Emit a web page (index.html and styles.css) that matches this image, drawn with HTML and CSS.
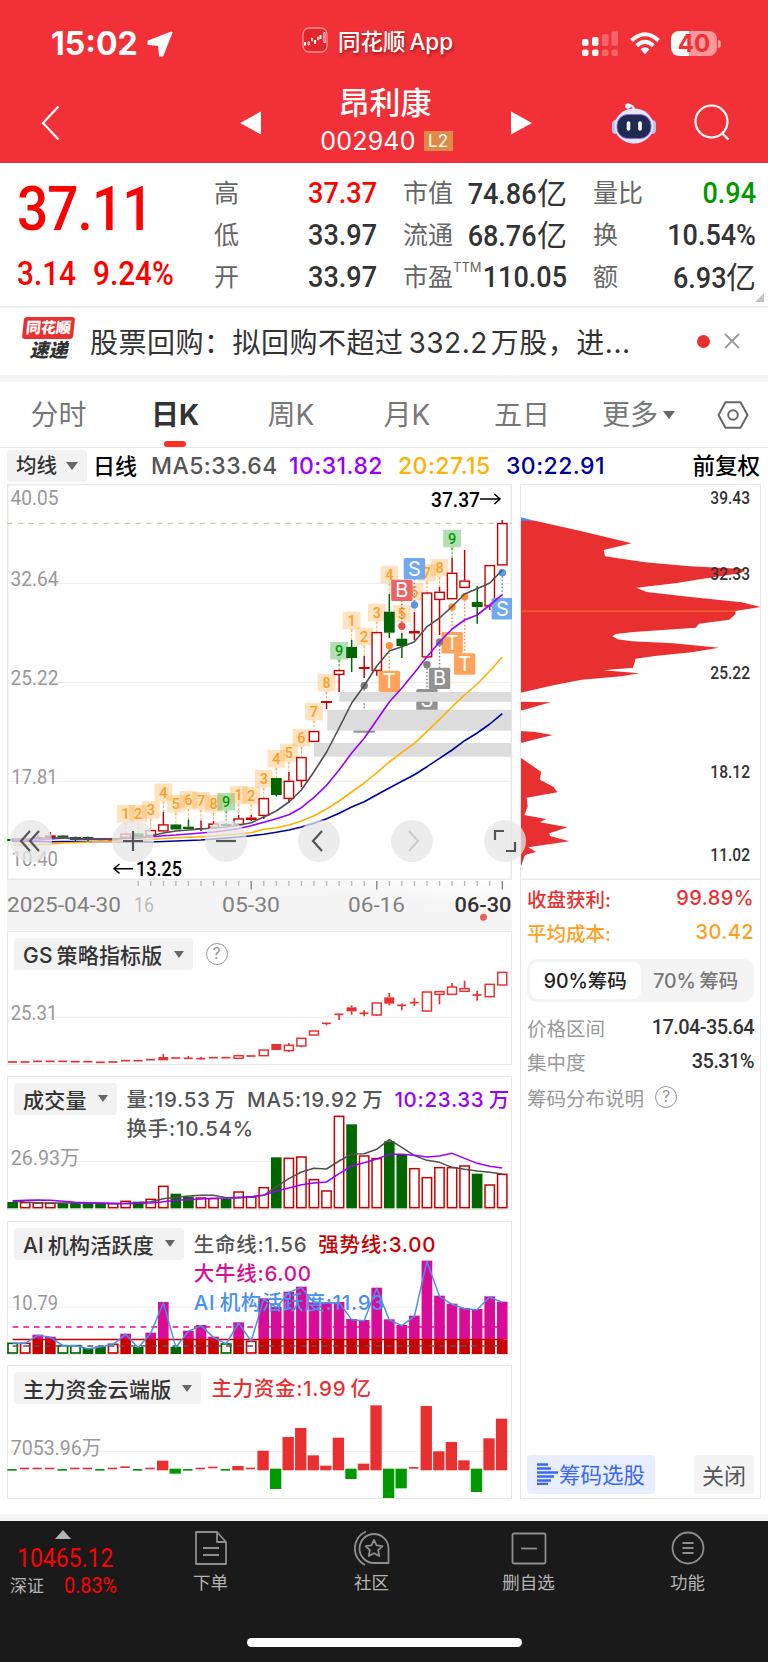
FILE: index.html
```html
<!DOCTYPE html>
<html lang="zh-CN">
<head>
    <meta charset="UTF-8">
    <meta name="viewport" content="width=device-width, initial-scale=1.0">
    <title>昂利康 002940</title>
    <link rel="stylesheet" href="styles.css">
</head>
<body>
    <header class="header">
        <div class="status-bar">
            <div class="clock">
                <span>15:02</span>
                <svg width="26" height="26" viewBox="0 0 26 26"><path d="M24.5 1.5 L15.5 24.5 L13 24.5 L12 14 L1.5 13 L1.5 10.5 Z" fill="#fff" stroke="#fff" stroke-width="2" stroke-linejoin="round"/></svg>
            </div>
            <div class="app-name">
                <svg width="26" height="26" viewBox="0 0 26 26"><rect x="1" y="1" width="24" height="24" rx="6" fill="#e3262b" stroke="#fb8f90" stroke-width="1.3"/><g stroke="#fff" fill="none"><path d="M3 15v3.500M13 13v4M18.500 8v4" stroke-width="2"/><path d="M6 15v3h1.4v-3zM9.500 11v3h1v-3zM15.500 10v3h1.200v-3zM21.800 5.500v10h1.400v-10z" stroke-width=".8"/></g></svg>
                <span>同花顺&thinsp;App</span>
            </div>
            <div class="signals">
                <svg width="37" height="26" viewBox="0 0 37 26"><g fill="#fff"><rect x="0" y="8" width="6.5" height="7" rx="2"/><rect x="10" y="6" width="6.5" height="9" rx="2"/><rect x="0" y="18.5" width="6.5" height="6.5" rx="2"/><rect x="10" y="18.5" width="6.5" height="6.5" rx="2"/></g><g fill="#fff" opacity=".25"><rect x="20" y="3" width="6.5" height="12" rx="2"/><rect x="29.5" y="0" width="6.5" height="15" rx="2"/><rect x="20" y="18.5" width="6.5" height="6.5" rx="2"/><rect x="29.5" y="18.5" width="6.5" height="6.5" rx="2"/></g></svg>
                <svg class="wifi" width="30" height="23" viewBox="0 0 30 23"><g fill="none" stroke="#fff" stroke-width="4"><path d="M1.5 8.5 Q15 -4 28.5 8.5"/><path d="M6.7 13.7 Q15 6 23.3 13.7"/></g><path d="M10.5 17.2 Q15 13.3 19.5 17.2 L15 22.2 Z" fill="#fff"/></svg>
                <div class="battery"><span>40</span></div>
            </div>
        </div>
        <div class="nav-bar">
            <svg class="back" width="19" height="36" viewBox="0 0 19 36"><path d="M17.5 1.5 L2 18 L17.5 34.5" fill="none" stroke="#fff" stroke-width="2.2"/></svg>
            <svg class="prev" width="22" height="24" viewBox="0 0 22 24"><path d="M0 12 L21 0.5 V23.5 Z" fill="#fff"/></svg>
            <div class="stock">
                <h1>昂利康</h1>
                <p>002940 <span class="level">L2</span></p>
            </div>
            <svg class="next" width="22" height="24" viewBox="0 0 22 24"><path d="M21 12 L0 0.5 V23.5 Z" fill="#fff"/></svg>
            <svg class="robot" width="44" height="42" viewBox="0 0 44 42">
                <path d="M16 4 Q21 2 22 8" fill="none" stroke="#e8edff" stroke-width="2.4"/>
                <circle cx="16" cy="4" r="2.8" fill="#eef1ff"/>
                <rect x="0" y="18" width="8" height="14" rx="4" fill="#b8c2f4"/>
                <rect x="36" y="18" width="8" height="14" rx="4" fill="#b8c2f4"/>
                <ellipse cx="22" cy="24" rx="19.5" ry="17.5" fill="#e2e8ff"/>
                <rect x="5" y="12.5" width="34" height="24" rx="11" fill="#202a50" stroke="#8f6be8" stroke-width="1"/>
                <path d="M16.500 21v6M28 21v6" stroke="#fff" stroke-width="3.600" stroke-linecap="round"/>
            </svg>
            <svg class="search" width="36" height="37" viewBox="0 0 36 37"><circle cx="17.5" cy="17.5" r="16" fill="none" stroke="#fff" stroke-width="2.2"/><path d="M28 29 L34.5 35.5" stroke="#fff" stroke-width="2.2"/></svg>
        </div>
    </header>

    <section class="quote">
        <div class="last">
            <div class="price"><span class="din">37.11</span></div>
            <div class="change"><span class="din">3.14</span><span class="din">9.24%</span></div>
        </div>
        <dl>
            <dt>高</dt><dd class="din up">37.37</dd>
            <dt>低</dt><dd class="din">33.97</dd>
            <dt>开</dt><dd class="din">33.97</dd>
        </dl>
        <dl>
            <dt>市值</dt><dd><span class="din">74.86</span>亿</dd>
            <dt>流通</dt><dd><span class="din">68.76</span>亿</dd>
            <dt>市盈<sup>TTM</sup></dt><dd class="din">110.05</dd>
        </dl>
        <dl>
            <dt>量比</dt><dd class="din down">0.94</dd>
            <dt>换</dt><dd class="din">10.54%</dd>
            <dt>额</dt><dd><span class="din">6.93</span>亿</dd>
        </dl>
    </section>

    <section class="news">
        <div class="news-logo"><b>同花顺</b><i>速递</i></div>
        <p>股票回购：拟回购不超过<span>332.2</span>万股，进...</p>
        <span class="dot"></span>
        <svg width="16" height="16" viewBox="0 0 16 16"><path d="M1 1 L15 15 M15 1 L1 15" stroke="#999" stroke-width="1.8"/></svg>
    </section>

    <nav class="tabs">
        <a>分时</a>
        <a class="active">日K</a>
        <a>周K</a>
        <a>月K</a>
        <a>五日</a>
        <a>更多<i class="caret"></i></a>
        <svg width="32" height="28" viewBox="0 0 32 28"><path d="M8.5 1.2 H23.5 L30.5 14 L23.5 26.8 H8.5 L1.5 14 Z" fill="none" stroke="#666" stroke-width="2"/><circle cx="16" cy="14" r="4.8" fill="none" stroke="#666" stroke-width="2"/></svg>
    </nav>

    <div class="ma-row">
        <span class="chip">均线<i class="caret"></i></span>
        <b>日线</b>
        <span>MA5:33.64</span>
        <span class="ma10">10:31.82</span>
        <span class="ma20">20:27.15</span>
        <span class="ma30">30:22.91</span>
        <b class="adjust">前复权</b>
    </div>

    <main class="board">
        <div class="charts">
            <div class="main-chart">
                <svg id="kline" width="505" height="396" viewBox="7 484 505 396"></svg>
                <div class="tools">
                    <button><svg viewBox="-21 -21 42 42"><path d="M-1 -10 L-10 0 L-1 10 M8 -10 L-1 0 L8 10"/></svg></button>
                    <button><svg viewBox="-21 -21 42 42"><path d="M-10 0 H10 M0 -10 V10"/></svg></button>
                    <button><svg viewBox="-21 -21 42 42"><path d="M-10 0 H10"/></svg></button>
                    <button><svg viewBox="-21 -21 42 42"><path d="M3 -10 L-6 0 L3 10"/></svg></button>
                    <button class="disabled"><svg viewBox="-21 -21 42 42"><path d="M-3 -10 L6 0 L-3 10"/></svg></button>
                    <button><svg viewBox="-21 -21 42 42"><path d="M-10 -1 V-10 H-1 M10 1 V10 H1"/></svg></button>
                </div>
            </div>
            <svg id="axis" width="505" height="50" viewBox="7 880 505 50"></svg>
            <div class="panel">
                <svg id="gs" width="505" height="134" viewBox="21 34 1515 402"></svg>
                <div class="legend">
                    <span class="chip">GS&thinsp;策略指标版<i class="caret"></i></span>
                    <span class="help">?</span>
                </div>
            </div>
            <div class="panel">
                <svg id="volume" width="505" height="134" viewBox="21 467 1515 402"></svg>
                <div class="legend">
                    <span class="chip">成交量<i class="caret"></i></span>
                    <div class="values"><span>量:19.53&thinsp;万</span><span>MA5:19.92&thinsp;万</span><span class="ma10">10:23.33&thinsp;万</span><br><span>换手:10.54%</span></div>
                </div>
            </div>
            <div class="panel">
                <svg id="ai" width="505" height="134" viewBox="21 31 1515 402"></svg>
                <div class="legend">
                    <span class="chip">AI&thinsp;机构活跃度<i class="caret"></i></span>
                    <div class="values"><span>生命线:1.56</span><span class="strong">强势线:3.00</span><br><span class="bull">大牛线:6.00</span><br><span class="active-line">AI&thinsp;机构活跃度:11.93</span></div>
                </div>
            </div>
            <div class="panel">
                <svg id="fund" width="505" height="134" viewBox="21 466 1515 402"></svg>
                <div class="legend">
                    <span class="chip">主力资金云端版<i class="caret"></i></span>
                    <div class="values"><span class="fund">主力资金:1.99&thinsp;亿</span></div>
                </div>
            </div>
        </div>

        <aside class="chips">
            <svg id="dist" width="241" height="396" viewBox="30 12 723 1188"></svg>
            <div class="chips-info">
                <p class="row profit"><span>收盘获利:</span><span>99.89%</span></p>
                <p class="row cost"><span>平均成本:</span><span>30.42</span></p>
                <div class="switch"><span class="on">90%筹码</span><span>70%&thinsp;筹码</span></div>
                <p class="row"><span>价格区间</span><b>17.04-35.64</b></p>
                <p class="row"><span>集中度</span><b>35.31%</b></p>
                <p class="row about"><span>筹码分布说明</span><span class="help">?</span></p>
            </div>
            <div class="chips-actions">
                <button class="pick"><svg width="21" height="22" viewBox="0 0 21 22"><path d="M0 1.5H11M0 5.5H14M0 9.5H21M0 13.5H17M0 17.5H14M0 21H11" stroke="#3a68f5" stroke-width="2.3"/></svg>筹码选股</button>
                <button>关闭</button>
            </div>
        </aside>
    </main>

    <footer class="footer">
        <div class="index">
            <i class="up-caret"></i>
            <div class="index-value"><span class="din">10465.12</span></div>
            <div class="index-row"><span>深证</span><span class="din">0.83%</span></div>
        </div>
        <a><svg width="36" height="36" viewBox="0 0 36 36"><path d="M3 2 H24 L33 12 V34 H3 Z M24 2 V12 H33 M10 18 H26 M10 25 H26"/></svg>下单</a>
        <a><svg width="36" height="36" viewBox="0 0 36 36"><path d="M20 4 A14.5 14.5 0 0 1 34.5 18 V33 H20 A14.5 14.5 0 0 1 20 4 Z M12 1.500 A18.500 18.500 0 0 0 11 35"/><path d="M20 10 L22.6 15.4 L28.4 16.1 L24.2 20.2 L25.2 26 L20 23.2 L14.8 26 L15.8 20.2 L11.6 16.1 L17.4 15.4 Z"/></svg>社区</a>
        <a><svg width="36" height="36" viewBox="0 0 36 36"><rect x="1.5" y="3.5" width="33" height="30" rx="1.5"/><path d="M10 18.5 H26"/></svg>删自选</a>
        <a><svg width="36" height="36" viewBox="0 0 36 36"><circle cx="18" cy="18" r="15.5"/><path d="M12.5 13 H23.5 M12.5 18 H23.5 M12.5 23 H23.5"/></svg>功能</a>
        <div class="home-bar"></div>
    </footer>

    <script src="charts.js"></script>
</body>
</html>
```

FILE: styles.css
```css
* {
    box-sizing: border-box;
}
body {
    margin: 0;
    width: 768px;
    background: #fff;
    color: #333;
    font-family: Inter, "Noto Sans CJK SC", sans-serif;
}
h1, p, dl, dd {
    margin: 0;
}
svg {
    display: block;
    flex: none;
}
button {
    border: none;
    padding: 0;
    font-family: inherit;
}
.din {
    font-family: Roboto, "Noto Sans CJK SC", sans-serif;
    font-weight: 500;
    display: inline-block;
    transform: scaleX(0.9);
    transform-origin: right center;
}
.caret {
    display: inline-block;
    border: 6px solid transparent;
    border-top: 8px solid #666;
    border-bottom: 0;
}

/* header */
.header {
    height: 163px;
    background: #f13037;
    color: #fff;
}
.status-bar {
    height: 84px;
    display: grid;
    grid-template-columns: 302px 280px 1fr;
}
.clock {
    display: flex;
    align-items: center;
    gap: 9px;
    padding: 3px 0 0 51px;
    font-size: 32px;
    font-weight: 700;
}
.app-name {
    display: flex;
    align-items: center;
    gap: 10px;
    padding-bottom: 5px;
    font-size: 22.5px;
    font-weight: 500;
    text-shadow: 1px 2px 3px rgba(80, 0, 0, 0.5);
}
.signals {
    display: flex;
    align-items: center;
    padding-top: 3px;
}
.wifi {
    margin: 0 11px 0 11px;
}
.battery {
    position: relative;
    width: 46px;
    height: 25px;
    border-radius: 8px;
    background: linear-gradient(90deg, #fff 40%, #f99 40%);
    color: #f13037;
    font-size: 24px;
    line-height: 25px;
    font-weight: 700;
    text-align: center;
}
.battery::after {
    content: "";
    position: absolute;
    right: -4px;
    top: 9px;
    width: 3px;
    height: 8px;
    border-radius: 0 3px 3px 0;
    background: #f99;
}
.nav-bar {
    height: 79px;
    display: flex;
    align-items: center;
    padding: 0 0 2px 41px;
}
.prev {
    margin-left: 180px;
}
.stock {
    width: 249px;
    text-align: center;
}
.stock h1 {
    padding-right: 3px;
    font-size: 31px;
    line-height: 37px;
    font-weight: 500;
}
.stock p {
    display: flex;
    justify-content: center;
    align-items: center;
    gap: 8px;
    height: 40px;
    font-size: 25px;
    letter-spacing: 0.2px;
}
.level {
    width: 29px;
    height: 20px;
    background: #e08a45;
    font-size: 17px;
    line-height: 20px;
}
.robot {
    margin-left: 79px;
}
.search {
    margin-left: 38px;
}

/* quote */
.quote {
    position: relative;
    height: 145px;
    display: grid;
    grid-template-columns: 197px 163px 164px 163px;
    column-gap: 26px;
    padding: 9px 0 0 17px;
    border-bottom: 2px solid #eee;
}
.quote::after {
    content: "";
    position: absolute;
    right: 4px;
    bottom: 4px;
    border-left: 9px solid transparent;
    border-bottom: 9px solid #c4c4c4;
}
.last {
    color: #fe0000;
    margin-right: -26px;
}
.last .din {
    transform-origin: left center;
}
.price {
    height: 76px;
    font-size: 61px;
    line-height: 72px;
    letter-spacing: -1px;
}
.change {
    height: 48px;
    display: flex;
    font-size: 33px;
    line-height: 51px;
}
.change span + span {
    margin-left: 11px;
}
.quote dl {
    display: grid;
    grid-template-columns: auto 1fr;
    grid-auto-rows: 42px;
    line-height: 42px;
    margin-left: -26px;
    margin-right: 26px;
}
.quote dt {
    font-size: 25px;
    color: #666;
    white-space: nowrap;
}
.quote sup {
    display: inline-block;
    margin-right: -30px;
    font-size: 13px;
    line-height: 13px;
    vertical-align: 14px;
}
.quote dd {
    font-size: 30px;
    text-align: right;
    white-space: nowrap;
}
.quote .up {
    color: #fe0000;
}
.quote .down {
    color: #009900;
}

/* news */
.news {
    height: 74px;
    display: flex;
    align-items: center;
    padding: 0 28px 7px 22px;
    border-bottom: 7px solid #f4f4f4;
}
.news-logo {
    width: 53px;
    display: flex;
    flex-direction: column;
    align-items: center;
    padding-top: 4px;
}
.news-logo b {
    width: 51px;
    height: 22px;
    background: #e93030;
    color: #fff;
    border-radius: 3px;
    transform: skewX(-6deg);
    font-size: 15px;
    line-height: 22px;
    font-weight: 900;
    text-align: center;
}
.news-logo i {
    font-size: 19px;
    line-height: 24px;
    font-weight: 900;
}
.news p {
    flex: 1;
    margin-left: 15px;
    padding-top: 5px;
    font-size: 28px;
    letter-spacing: 0.5px;
    white-space: nowrap;
}
.news p span {
    padding: 0 3px 0 5px;
}
.dot {
    width: 13px;
    height: 13px;
    margin: 6px 14px 0 0;
    border-radius: 50%;
    background: #e93030;
}
.news svg {
    margin-top: 6px;
}

/* tabs */
.tabs {
    height: 66px;
    display: grid;
    grid-template-columns: 117px 116px 116px 116px 114px 119px 1fr;
    align-items: center;
    border-bottom: 1px solid #e6e6e6;
}
.tabs a {
    height: 65px;
    line-height: 66px;
    font-size: 28px;
    color: #777;
    text-align: center;
}
.tabs .active {
    position: relative;
    color: #333;
    font-weight: 700;
}
.tabs .active::after {
    content: "";
    position: absolute;
    left: 47px;
    bottom: 0;
    width: 22px;
    height: 6px;
    border-radius: 3px;
    background: #f83028;
}
.tabs .caret {
    margin-left: 5px;
    vertical-align: 6px;
}
.tabs svg {
    margin-left: 19px;
}

/* moving averages row */
.chip {
    display: inline-flex;
    align-items: center;
    justify-content: space-between;
    height: 32px;
    padding: 0 9px;
    border-radius: 4px;
    background: #f2f2f2;
    color: #333;
    font-size: 21px;
    font-weight: 500;
    letter-spacing: 0.2px;
    white-space: nowrap;
}
.ma-row {
    height: 36px;
    display: grid;
    grid-template-columns: 86px 58px 138px 109px 108px 120px 1fr;
    align-items: center;
    padding-left: 7px;
    font-size: 23px;
    line-height: 34px;
    font-weight: 500;
    letter-spacing: 0.45px;
    color: #555;
    white-space: nowrap;
}
.ma-row .chip {
    width: 80px;
    font-size: 20.5px;
    letter-spacing: 0;
}
.ma-row b {
    font-size: 22px;
    font-weight: 500;
    line-height: 32px;
    letter-spacing: 0;
    color: #000;
}
.ma-row .adjust {
    padding-right: 8px;
    font-size: 22.5px;
    text-align: right;
}
.ma10 {
    color: #9900ff;
}
.ma20 {
    color: #ffb000;
}
.ma30 {
    color: #00009c;
}

/* charts */
.board {
    height: 1030px;
    display: flex;
    gap: 8px;
    padding-left: 7px;
}
.charts {
    width: 505px;
}
.main-chart {
    position: relative;
}
.tools {
    position: absolute;
    z-index: 2;
    left: 3px;
    top: 336px;
    width: 517px;
    display: flex;
    gap: 51px;
}
.tools button {
    flex: none;
    width: 42px;
    height: 42px;
    border-radius: 50%;
    background: rgba(229, 229, 229, 0.75);
}
.tools button:first-child {
    margin-right: 9px;
}
.tools path {
    fill: none;
    stroke: #555;
    stroke-width: 2.2;
}
.tools .disabled path {
    stroke: #ccc;
}
.panel {
    display: grid;
    width: 505px;
    height: 134px;
    margin-bottom: 10.8px;
    border: 1.5px solid #e8e8e8;
}
#axis {
    margin-bottom: 1px;
}
.panel > * {
    grid-area: 1 / 1;
}
.panel > svg {
    margin: -1.5px;
}
.legend {
    display: flex;
    align-items: flex-start;
    padding: 6px 0 0 6px;
    height: 120px;
}
.legend .caret {
    margin-left: 11px;
    border-width: 7px 5.5px 0;
}
.legend .help {
    margin: 5px 0 0 13px;
}
.values {
    margin-left: 10px;
    padding-top: 2px;
    font-size: 20.5px;
    line-height: 29px;
    font-weight: 500;
    letter-spacing: 0.7px;
    color: #555;
    white-space: nowrap;
}
.values span {
    margin-right: 11px;
}
.values .strong {
    color: #c80000;
}
.values .bull {
    color: #d80c96;
}
.values .active-line {
    color: #4a90ee;
}
.values .fund {
    color: #e93030;
}
.values .ma10 {
    color: #9900ff;
    margin-right: 0;
}
.help {
    width: 22px;
    height: 22px;
    border: 1.6px solid #999;
    border-radius: 50%;
    color: #999;
    font-size: 16px;
    line-height: 19px;
    text-align: center;
}

/* chip distribution */
.chips {
    width: 241px;
    height: 1015px;
    display: flex;
    flex-direction: column;
    border: 1px solid #e8e8e8;
}
.chips > svg {
    margin: -1px;
}
.chips-info {
    padding: 2px 6px 0 6px;
}
.row {
    display: flex;
    justify-content: space-between;
    align-items: center;
    height: 34px;
    font-size: 19.5px;
    color: #999;
}
.row b {
    font-family: Roboto, sans-serif;
    font-size: 20px;
    font-weight: 500;
    color: #333;
    letter-spacing: -0.6px;
}
.profit {
    color: #e93030;
    font-weight: 500;
}
.cost {
    color: #ffa01e;
    font-weight: 500;
}
.profit span + span, .cost span + span {
    font-size: 20px;
    letter-spacing: 0.4px;
}
.switch {
    display: flex;
    height: 43px;
    margin: 10px 0 8px;
    padding: 3px;
    border-radius: 10px;
    background: #f4f4f4;
    font-size: 19.5px;
    font-weight: 500;
    line-height: 38px;
    color: #777;
    text-align: center;
}
.switch span {
    flex: 1;
}
.switch .on {
    background: #fff;
    border-radius: 8px;
    color: #222;
}
.about {
    justify-content: flex-start;
    gap: 11px;
    height: 38px;
}
.chips-actions {
    display: flex;
    justify-content: space-between;
    margin-top: auto;
    padding: 0 6px 4px;
}
.chips-actions button {
    width: 60px;
    height: 39px;
    padding-bottom: 2px;
    border-radius: 4px;
    background: #f4f4f4;
    color: #555;
    font-size: 22px;
}
.chips-actions .pick {
    display: flex;
    align-items: center;
    justify-content: center;
    gap: 1px;
    width: 128px;
    background: #e8eeff;
    color: #3a68f5;
    font-size: 21.5px;
}

/* footer */
.footer {
    position: relative;
    height: 148px;
    display: flex;
    border-top: 7px solid #f4f4f4;
    background: #1a1a1a;
    color: #b4b4b4;
}
.index {
    width: 131px;
    padding: 9px 0 0 10px;
}
.up-caret {
    display: block;
    margin-left: 45px;
    width: 0;
    border: 8px solid transparent;
    border-top: 0;
    border-bottom: 9px solid #b4b4b4;
}
.index-value {
    margin: 2px 0 0 7px;
    height: 32px;
    font-size: 25.5px;
    line-height: 34px;
    color: #f00;
}
.index .din {
    transform-origin: left center;
    font-weight: 400;
}
.index-row {
    display: flex;
    gap: 20px;
    font-size: 17px;
    line-height: 26px;
}
.index-row .din {
    color: #f00;
    font-size: 22px;
}
.footer a {
    width: 159px;
    padding-top: 9px;
    display: flex;
    flex-direction: column;
    align-items: center;
    font-size: 17.5px;
    line-height: 33px;
}
.footer a:nth-of-type(2) {
    padding-left: 4px;
}
.footer a path, .footer a rect, .footer a circle {
    fill: none;
    stroke: #8e8e8e;
    stroke-width: 1.8;
    stroke-linejoin: round;
}
.home-bar {
    position: absolute;
    left: 247px;
    bottom: 15px;
    width: 275px;
    height: 9px;
    border-radius: 5px;
    background: #fff;
}
```

FILE: charts.js
```js
const RED = '#cc0000';
const GREEN = '#006600';

function rect(x, y, w, h, fill, extra = '') {
    return `<rect x="${x}" y="${y}" width="${w}" height="${h}" fill="${fill}" ${extra}/>`;
}
function line(x1, y1, x2, y2, stroke, w, extra = '') {
    return `<line x1="${x1}" y1="${y1}" x2="${x2}" y2="${y2}" stroke="${stroke}" stroke-width="${w}" ${extra}/>`;
}
function text(x, y, size, str, fill, width, extra = '') {
    const len = width ? `textLength="${width}" lengthAdjust="spacingAndGlyphs"` : '';
    return `<text x="${x}" y="${y}" font-size="${size}" fill="${fill}" font-family="Roboto, Noto Sans CJK SC, sans-serif" ${len} ${extra}>${str}</text>`;
}
function poly(values, fx, stroke, w) {
    const pts = values.map((v, i) => fx(i).toFixed(1) + ',' + v).join(' ');
    return `<polyline points="${pts}" fill="none" stroke="${stroke}" stroke-width="${w}" stroke-linejoin="round"/>`;
}

// x centre of a day, in px and in the sub charts' units (1/3 px)
const px = i => 12.7 + 12.554 * i;
const ux = i => 38 + 37.66 * i;

/* ---------- K line ---------- */
// [color, hollow, high, top, bottom, low]
const candles = [
    ['g', 0, 838, 839, 841, 842], ['r', 0, 838, 839, 841, 841], ['r', 0, 835, 837, 839, 839], ['r', 0, 832, 835.3, 838, 838],
    ['g', 0, 835, 835.5, 837.5, 837.5], ['g', 0, 836.5, 837, 840, 841], ['g', 0, 836.5, 837, 840, 841], ['g', 0, 838, 838, 840, 840],
    ['r', 0, 838, 838.5, 840.5, 840.5], ['r', 1, 833.5, 833.5, 838, 838], ['g', 0, 833.3, 833.3, 837, 837], ['r', 1, 830, 830, 836, 836],
    ['r', 1, 812, 824.3, 831.5, 831.5], ['g', 0, 824, 824.5, 829.5, 829.5], ['g', 0, 819.5, 826.7, 829, 829], ['r', 0, 820.5, 828, 829, 831],
    ['r', 1, 821, 823.5, 828, 828], ['g', 0, 823, 824, 826, 826], ['r', 1, 815, 818.3, 825, 825], ['r', 0, 815, 817.5, 820, 821],
    ['r', 1, 798, 798, 816, 819], ['g', 0, 778, 778, 795, 796.5], ['r', 1, 772, 780.7, 799, 803], ['r', 1, 757, 757, 781, 787],
    ['r', 1, 731, 731, 742, 742], ['r', 0, 701, 701, 703, 709], ['r', 1, 670, 670, 675, 692], ['g', 0, 640, 647, 658, 672],
    ['r', 0, 656, 667, 669, 678], ['r', 1, 632, 632, 671, 675.7], ['g', 0, 594, 611.7, 632.7, 638], ['g', 0, 633, 638.7, 646, 658],
    ['r', 0, 612, 631, 633.5, 640], ['r', 1, 592, 592.5, 657.5, 658], ['r', 1, 587, 591.7, 600, 635], ['r', 1, 558, 572.7, 599.3, 599.3],
    ['r', 1, 550, 580.5, 588, 588], ['g', 0, 585.7, 602, 607, 623.7], ['r', 1, 565, 565, 606.5, 610], ['r', 1, 520, 523, 565.5, 565.5]
];

// TD sequence marks: [day, number, top]
const marks = [
    [9, 1, 805], [10, 2, 805], [11, 3, 801], [12, 4, 783.5], [13, 5, 795], [14, 6, 791], [15, 7, 792], [16, 8, 795], [17, 9, 793],
    [18, 1, 786], [19, 2, 786.7], [20, 3, 770], [21, 4, 750], [22, 5, 743.7], [23, 6, 729], [24, 7, 702.7], [25, 8, 674], [26, 9, 642],
    [27, 1, 611.7], [28, 2, 627.7], [29, 3, 603.7], [30, 4, 565.7], [31, 5, 605], [32, 6, 583], [33, 7, 564], [34, 8, 559], [35, 9, 529.7]
];

const ma5 = [839, 839, 838, 838, 838, 839, 839, 839.5, 839, 838.5, 838, 836, 833, 831, 830, 829, 828, 827, 825.3, 822.7, 817, 811, 802, 790, 771.7, 752, 728, 703, 685.7, 666, 651, 646.7, 641.7, 626.7, 618, 606.7, 594, 588.7, 583, 570];
const ma10 = [841, 841, 840, 839, 838, 838.5, 838.7, 839, 839, 838, 838, 837, 835.7, 835, 834, 833, 832, 830.5, 828.5, 825.7, 822.3, 818.7, 814.7, 807.7, 797.3, 785.3, 770, 753, 738.3, 720, 702, 688, 672.7, 656.7, 642, 629, 620, 615, 605, 594.7];
const ma20 = [845, 845, 844.5, 844, 843, 842.5, 842, 841.5, 841.5, 841, 840.5, 839.5, 838.5, 837.7, 837.3, 836.7, 836, 835, 834, 832.7, 829.3, 827.7, 825, 821, 815.7, 809, 801, 792, 783, 772.7, 762, 752.3, 743.3, 731.3, 719.3, 706.7, 695, 684, 671, 657];
const ma30 = [841.5, 841.5, 841.5, 841.7, 841.5, 841.5, 841.5, 841.5, 841.5, 842, 842, 842, 841.5, 841, 840.5, 840, 839, 838, 837, 835.7, 834.3, 832.3, 830, 827, 823.3, 818.7, 813.3, 807, 801.7, 794.7, 788, 781.3, 774.7, 766.7, 758.3, 750, 740.7, 733, 724, 713.7];

// trade signal: letter square joined to a dot by a dotted line
function signal(i, letter, top, dot, fill, dotFill) {
    const x = px(i);
    const end = top > dot ? top : top + 21;
    return line(x, dot, x, end, dotFill, 1.5, 'stroke-dasharray="1.5 2"')
        + `<circle cx="${x}" cy="${dot}" r="3.7" fill="${dotFill}"/>`
        + rect(x - 10.7, top, 21.4, 21.4, fill, 'rx="1.5"')
        + text(x, top + 17.6, 20, letter, '#fff', 0, 'text-anchor="middle" style="font-family:Inter"');
}

function drawKline() {
    let s = '';
    [583.3, 682.3, 781.3].forEach(y => { s += line(7, y, 512, y, '#ececec', 1); });
    s += rect(7.7, 484.7, 503.6, 394.6, 'none', 'stroke="#e8e8e8" stroke-width="1.5"');
    s += line(7, 523.3, 512, 523.3, '#d9b48c', 1, 'stroke-dasharray="5.5 5.2"');
    s += text(10.5, 504.5, 21, '40.05', '#999', 48);
    s += text(10.5, 586, 21, '32.64', '#999', 48);
    s += text(10.5, 685, 21, '25.22', '#999', 48);
    s += text(11.5, 784, 21, '17.81', '#999', 46);
    s += text(11.5, 865.5, 21, '10.40', '#999', 46.5);

    s += signal(28, 'S', 711.3, 685.7, '#929292', '#808080');
    s += signal(33, 'S', 689, 664.7, '#929292', '#808080');
    s += rect(339.3, 692, 172, 9.7, '#dcdcdc');
    s += rect(327.3, 709.7, 184, 21, '#dcdcdc');
    s += rect(314, 743, 197, 13.7, '#dcdcdc');

    marks.forEach(([i, n, y]) => {
        const x = px(i);
        const nine = n === 9;
        const col = nine ? '#009a00' : '#ff9d1c';
        const fill = nine ? 'rgba(0,150,0,.3)' : 'rgba(255,154,30,.28)';
        s += line(x, y + 18, x, candles[i][2], col, 1, 'stroke-dasharray="2.5 1.5" opacity=".8"');
        s += `<path d="M${x - 8.9} ${y} h17.8 v17.5 h-6.5 l-2.4 3.5 l-2.4 -3.5 h-6.5 z" fill="${fill}"/>`;
        s += text(x, y + 14, 14.5, n, col, 0, 'text-anchor="middle" font-weight="500"');
    });

    candles.forEach(([c, hollow, high, top, bottom, low], i) => {
        const x = px(i);
        const col = c === 'g' ? GREEN : RED;
        if (high < top) s += line(x, high, x, top, col, 1.5);
        if (low > bottom) s += line(x, bottom, x, low, col, 1.5);
        s += hollow
            ? rect(x - 4.7, top + .6, 9.4, Math.max(bottom - top - 1.2, 1), '#fff', `stroke="${col}" stroke-width="1.4"`)
            : rect(x - 5.4, top, 10.8, bottom - top, col);
    });

    s += signal(31, 'B', 579.7, 626.3, '#ec6464', '#e85050');
    s += signal(32, 'S', 558, 605, '#70a9f2', '#5896ea');
    s += signal(30, 'T', 670.7, 645.7, '#ffa35a', '#ff8f3c');
    s += signal(35, 'T', 632, 607, '#ffa35a', '#ff8f3c');
    s += signal(36, 'T', 653.3, 596.7, '#ffa35a', '#ff8f3c');
    s += signal(34, 'B', 667.7, 642, '#929292', '#808080');
    s += signal(39, 'S', 598, 572.7, '#70a9f2', '#5896ea');

    s += poly(ma30, px, '#00009c', 1.6);
    s += poly(ma20, px, '#ffb000', 1.6);
    s += poly(ma10, px, '#9900ff', 1.6);
    s += poly(ma5, px, '#505050', 1.6);

    s += text(431, 506.5, 21, '37.37', '#000', 49, 'font-weight="500"');
    s += '<path d="M480 499 h20 M494.5 494 l5.5 5 l-5.5 5" fill="none" stroke="#000" stroke-width="1.5"/>';
    s += text(136, 876, 21, '13.25', '#000', 46, 'font-weight="500"');
    s += '<path d="M133 868.7 h-19 M119.5 864 l-5.5 4.7 l5.5 4.7" fill="none" stroke="#000" stroke-width="1.5"/>';
    document.getElementById('kline').innerHTML = s;
}

function drawAxis() {
    let s = '<defs><linearGradient id="fade" x1="0" y1="1" x2="1" y2="0"><stop offset="0" stop-color="#f3f3f3"/><stop offset=".7" stop-color="#f5f5f5"/><stop offset="1" stop-color="#fff"/></linearGradient></defs>';
    s += rect(7, 880, 505, 50, 'url(#fade)');
    for (let i = 10; i < 40; i++) {
        const major = i % 10 === 9;
        s += line(px(i), 881, px(i), major ? 889.5 : 886, major ? '#888' : '#bbb', 1.4);
    }
    s += text(7, 912, 21, '2025-04-30', '#808080', 114);
    s += text(134, 912, 21, '16', '#bbb', 20);
    s += text(222, 912, 21, '05-30', '#808080', 58);
    s += text(348, 912, 21, '06-16', '#808080', 57);
    s += text(454.5, 912, 21, '06-30', '#333', 57, 'font-weight="500"');
    s += '<circle cx="483.5" cy="917.3" r="3.5" fill="#f25c5c"/>';
    document.getElementById('axis').innerHTML = s;
}

/* ---------- GS ---------- */
// [top, bottom, high, low, hollow]
const gs = [
    [427], [427], [425], [425], [425], [426], [426], [428], [427], [423], [423], [420],
    [412, 422, 403, 422], [415], [416, 0, 409, 418], [417, 0, 411, 419], [414], [414], [408, 416, 408, 416, 1], [409],
    [391, 408, 391, 408, 1], [373, 391, 373, 391], [377, 393, 370, 397, 1], [356, 379, 356, 383, 1], [334, 346, 334, 346, 1],
    [311, 0, 311, 317], [284, 0, 284, 301], [263, 275, 257, 285], [281, 0, 272, 290], [250, 286, 250, 289, 1],
    [233, 252, 220, 257], [257, 0, 252, 272], [249, 0, 235, 259], [217, 274, 217, 274, 1], [216, 224, 216, 254, 1],
    [202, 224, 190, 224, 1], [207, 215, 183, 215, 1], [226, 0, 213, 243], [194, 231, 194, 231, 1], [158, 196, 158, 196, 1]
];

function drawGs() {
    const col = '#e93030';
    let s = line(21, 292.5, 1536, 292.5, '#ececec', 3);
    s += text(32, 300, 62, '25.31', '#999', 140);
    gs.forEach(([top, bottom, high, low, hollow], i) => {
        const x = ux(i);
        if (!bottom) {
            s += rect(x - 14, top - 2.5, 27, 5, col);
            if (high) s += line(x, high, x, low, col, 5);
            return;
        }
        s += line(x, high, x, top, col, 5) + line(x, bottom, x, low, col, 5);
        s += hollow
            ? rect(x - 13.5, top, 27, bottom - top, '#fff', `stroke="${col}" stroke-width="4.5"`)
            : rect(x - 15, top, 30, bottom - top, col);
    });
    document.getElementById('gs').innerHTML = s;
}

/* ---------- volume ---------- */
const volume = 'g848 r850 r851 r852 g851 g851 g852 g853 r853 r846 g847 r840 r801 g823 g832 r836 r838 g838 r818 r833 r805 g714 r717 r713 r781 r815 r591 g615 r710 r718 g666 g704 r748 r775 r745 r745 r740 g763 r797 r765'.split(' ');
const vma5 = [845, 848, 850, 851, 851, 851, 852, 852, 853, 852, 850, 847, 838, 834, 830, 828, 828, 835, 836, 832, 828, 802, 778, 758, 747, 749, 725, 704, 703, 690, 661, 684, 709, 723, 729, 744, 750, 755, 759, 764];
const vma10 = [844, 843, 842, 843, 846, 849, 850, 851, 852, 853, 852, 851, 847, 843, 841, 839, 837, 836, 834, 832, 828, 815, 806, 796, 791, 788, 763, 740, 730, 719, 705, 705, 708, 713, 710, 702, 717, 732, 741, 746];

function drawVolume() {
    let s = line(21, 727, 1536, 727, '#ececec', 3);
    s += text(32, 736, 62, '26.93万', '#999', 207);
    volume.forEach((v, i) => {
        const x = ux(i);
        const y = +v.slice(1);
        s += v[0] === 'g'
            ? rect(x - 16, y, 32, 867 - y, GREEN)
            : rect(x - 14, y, 28, 865 - y, '#fff', `stroke="${RED}" stroke-width="4.5"`);
    });
    s += poly(vma5, ux, '#505050', 4.5);
    s += poly(vma10, ux, '#9900ff', 4.5);
    document.getElementById('volume').innerHTML = s;
}

/* ---------- AI activity ---------- */
// b = solid bar, g = green solid, o / p = hollow green / hollow red
const ai = 'o399 p399 b375 b381 o406 o406 g415 g410 p402 b372 g412 b369 b277 g411 b363 b346 b381 o401 b338 p393 b266 b292 b246 b231 b278 b278 b277 b328 b331 b234 b329 b346 b318 b153 b258 b282 b295 b298 b260 b276'.split(' ');

function drawAi() {
    let s = line(21, 292.5, 1536, 292.5, '#ececec', 3);
    s += text(36, 300, 62, '10.79', '#999', 138);
    s += line(38, 352, 1510, 352, '#d80c96', 4, 'stroke-dasharray="17 15"');
    ai.forEach((v, i) => {
        const x = ux(i);
        const y = +v.slice(1);
        if (v[0] === 'b') {
            s += rect(x - 16, y, 32, 390 - y, '#d80c96') + rect(x - 16, 390, 32, 43, RED);
        } else if (v[0] === 'g') {
            s += rect(x - 16, y, 32, 433 - y, GREEN);
        } else {
            s += rect(x - 14, y + 2, 28, 428 - y, '#fff', `stroke="${v[0] === 'o' ? GREEN : RED}" stroke-width="5"`);
        }
    });
    s += line(38, 389.5, 1510, 389.5, RED, 5);
    s += line(38, 409, 1510, 409, '#555', 4, 'stroke-dasharray="17 15"');
    s += poly(ai.map(v => +v.slice(1) + 2), ux, '#4a90ee', 4.5);
    document.getElementById('ai').innerHTML = s;
}

/* ---------- main fund ---------- */
const fund = 'g780 r776 r776 r776 g780 r776 r776 g780 r776 r772 g780 r776 r753 g792 g780 r776 r773 g780 r769 r776 r723 g838 r682 r655 r737 r768 r684 g808 r762 r587 g865 g836 r774 r589 r725 r697 r752 g847 r686 r627'.split(' ');

function drawFund() {
    let s = line(21, 726, 1536, 726, '#ececec', 3);
    s += text(32, 736, 62, '7053.96万', '#999', 272);
    fund.forEach((v, i) => {
        const x = 36 + 37.66 * i;
        const y = +v.slice(1);
        const small = Math.abs(y - 776) < 5;
        if (small) s += rect(x - 14, y - 2, 28, 5, v[0] === 'g' ? '#009900' : '#e93030');
        else if (v[0] === 'g') s += rect(x - 17, 777, 34, y - 777, '#009900');
        else s += rect(x - 17, y, 34, 782 - y, '#e93030');
    });
    document.getElementById('fund').innerHTML = s;
}

/* ---------- chip distribution ---------- */
const dist = [
    '32,122 75,122 215,154 365,190 281,210 285,229 405,247 540,259 700,267 705,273 690,280 575,297 495,310 379,323 410,336 535,350 695,367 752,381 676,393 677,402 658,419 567,431 557,443 370,456 318,462 307,469 323,478 365,484 490,490 627,503 545,517 435,528 377,536 369,563 280,571 388,580 335,589 215,599 130,616 32,638',
    '32,665 122,667 32,692',
    '32,753 75,756 128,765 32,789',
    '32,833 93,875 90,899 131,921 142,937 50,953 53,980 43,1005 108,1017 90,1027 173,1042 118,1060 120,1068 178,1084 55,1102 78,1116 45,1125 32,1162'
];

function drawDist() {
    let s = '<polygon points="32,112 75,122 32,124" fill="#4a90ee"/>';
    dist.forEach(p => { s += `<polygon points="${p}" fill="#e93030"/>`; });
    s += line(32, 393.5, 676, 393.5, '#f0662a', 4);
    s += line(30, 1198, 753, 1198, '#e8e8e8', 3);
    s += rect(31.5, 13.5, 720, 1184, 'none', 'stroke="#e8e8e8" stroke-width="3"');
    [['39.43', 71], ['32.33', 299], ['25.22', 597], ['18.12', 894], ['11.02', 1143]].forEach(([t, y]) => {
        s += text(601, y, 54, t, '#333', 119, 'font-weight="500"');
    });
    document.getElementById('dist').innerHTML = s;
}

drawKline();
drawAxis();
drawGs();
drawVolume();
drawAi();
drawFund();
drawDist();
```
